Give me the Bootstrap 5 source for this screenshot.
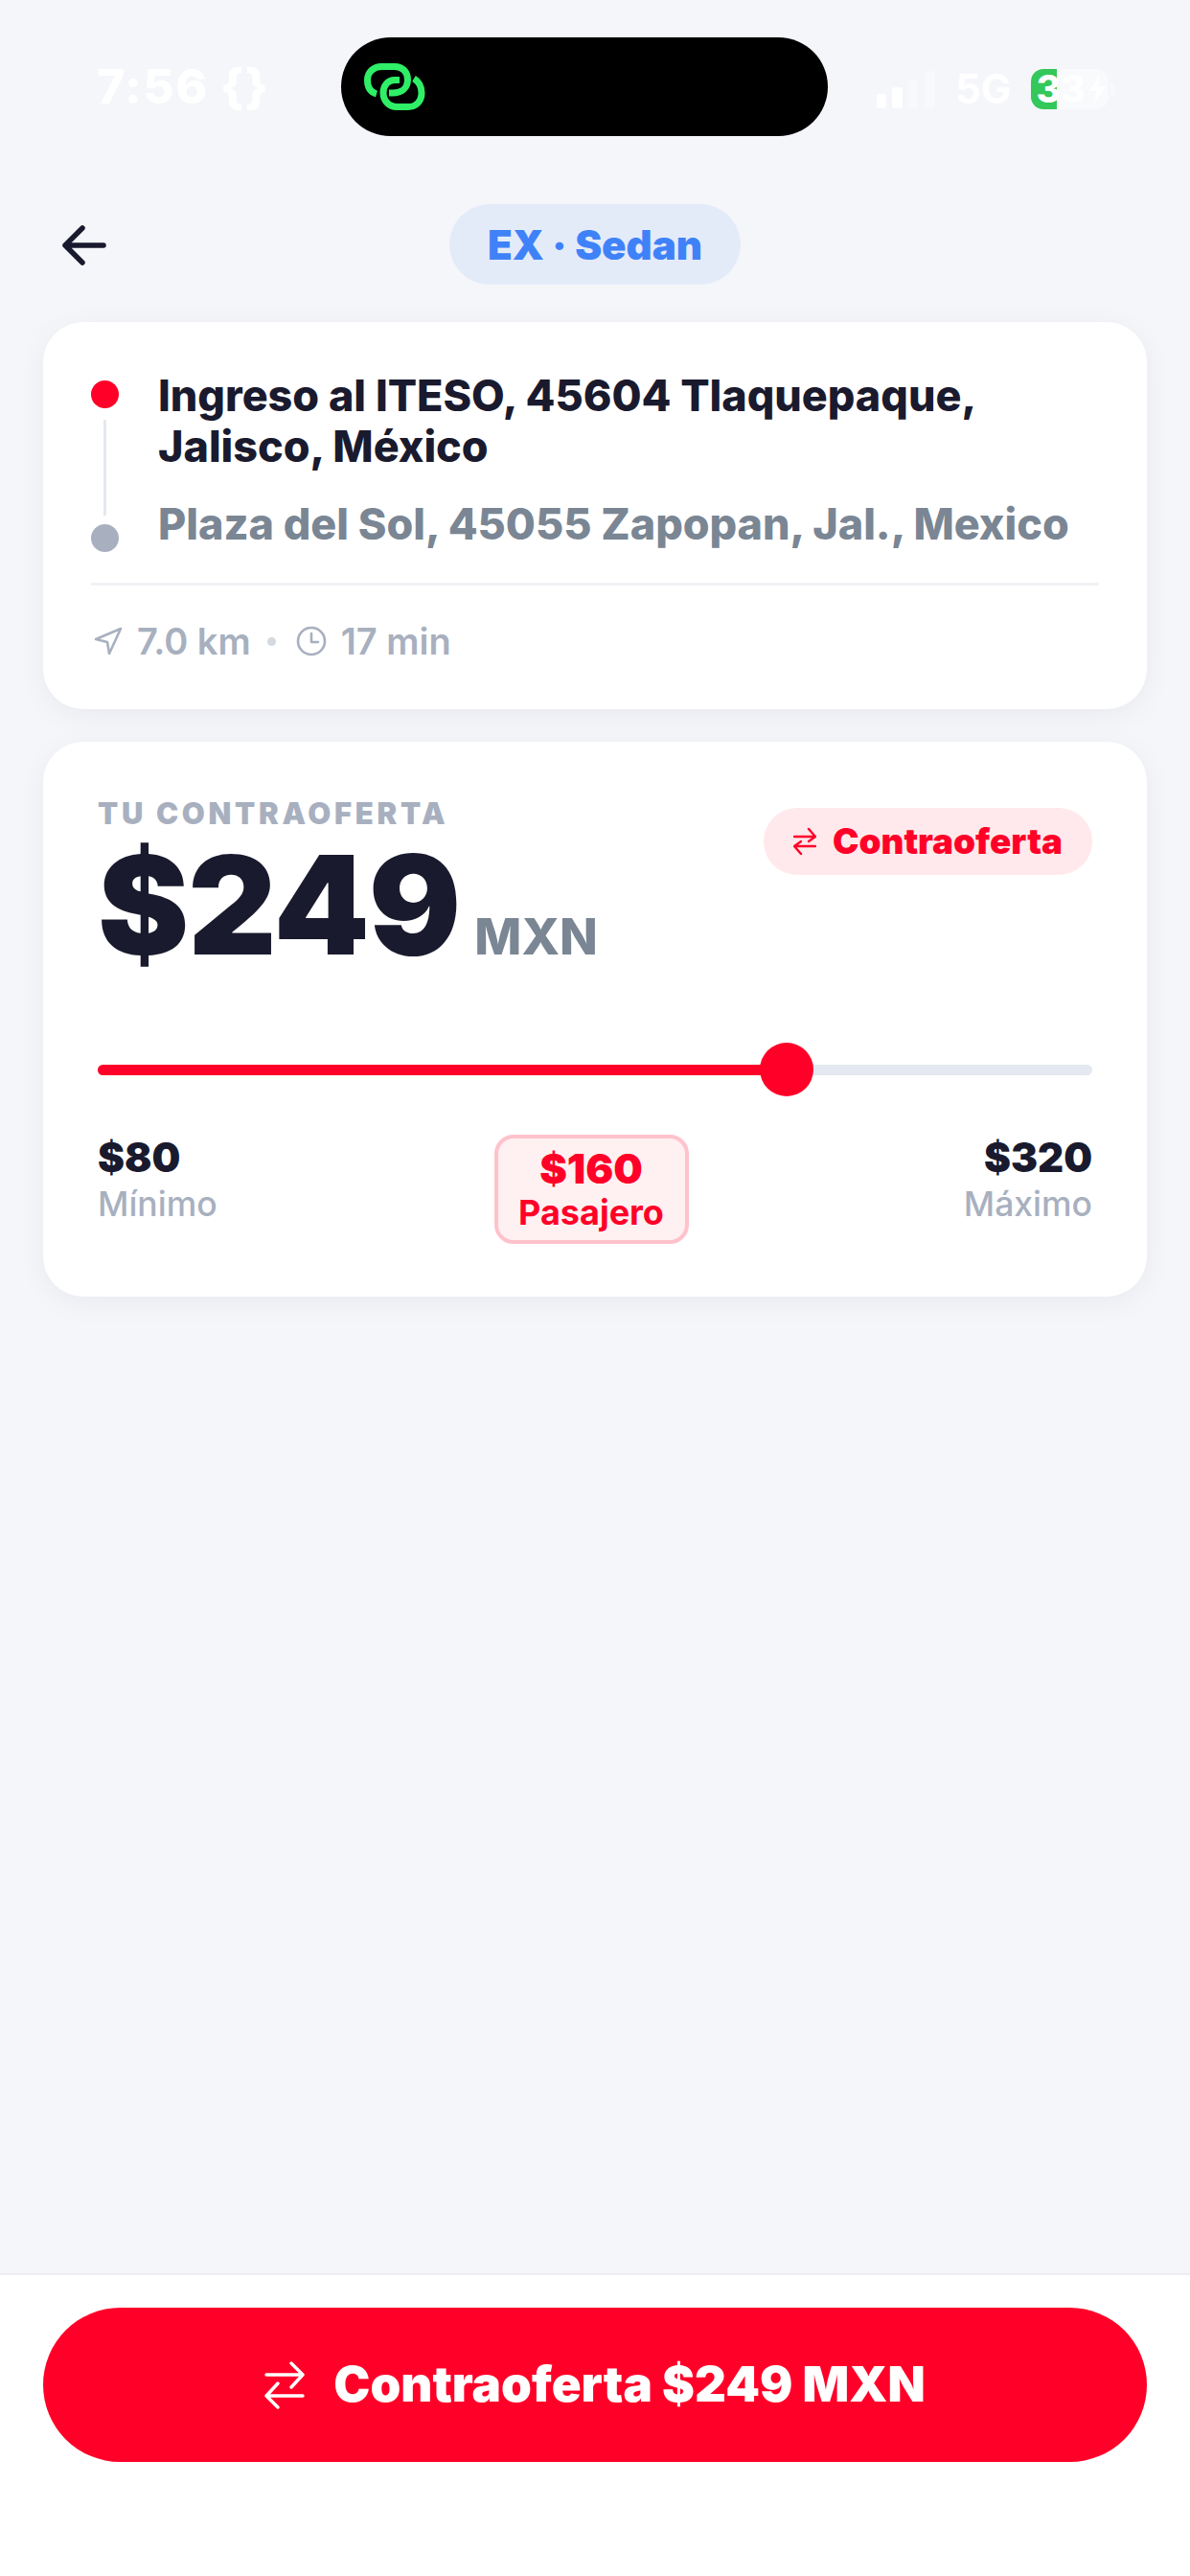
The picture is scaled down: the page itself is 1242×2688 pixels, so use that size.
<!DOCTYPE html>
<html lang="es">
<head>
    <meta charset="UTF-8">
    <meta name="viewport" content="width=device-width, initial-scale=1.0">
    <title>Contraoferta</title>
    <link rel="stylesheet" href="https://cdn.jsdelivr.net/npm/bootstrap@5.3.0/dist/css/bootstrap.min.css">
    <style>
        body { width: 1242px; height: 2688px; background: #f4f6fa; font-family: Inter, "Liberation Sans", sans-serif; color: #1a1a2e; overflow: hidden; }
        .status-row { height: 142px; padding: 39px 0 0; }
        .status-left { width: 356px; padding: 26px 0 0 101px; font-size: 50px; font-weight: 800; color: #fff; line-height: 50px; letter-spacing: 1.4px; }
        .island { width: 508px; height: 103px; background: #000; border-radius: 52px; padding: 27px 0 0 24px; }
        .status-right { padding: 30px 0 0 51px; color: #fff; font-size: 42px; font-weight: 700; line-height: 48px; }
        .signal-label { margin-left: 20px; }
        .batt-box { width: 81px; height: 42px; margin-left: 21px; border-radius: 13px; background: rgba(255,255,255,.45); font-size: 39px; font-weight: 800; line-height: 42px; }
        .batt-fill { width: 27px; background: #34c759; border-radius: 13px 0 0 13px; }
        .batt-num { left: 5px; top: 0; }
        .batt-bolt { right: 3px; top: 6px; }
        .batt-nub { width: 4px; height: 14px; margin-left: 2px; background: rgba(255,255,255,.4); border-radius: 0 4px 4px 0; }
        .top-bar { height: 84px; margin-top: 71px; padding: 0 65px; }
        .back-btn { left: 65px; top: 22px; }
        .type-pill { width: 304px; height: 84px; background: #e4ebf8; color: #3f82f8; font-size: 42px; font-weight: 900; }
        .page-cards { padding: 39px 45px 0; gap: 34px; }
        .app-card { border: 0; border-radius: 42px; background: #fff; box-shadow: 0 6px 30px rgba(26,26,46,.05); }
        .route-card { height: 404px; padding: 51px 50px 0; }
        .route-marks { width: 29px; padding-top: 10px; margin-right: 41px; }
        .dot { width: 29px; height: 29px; border-radius: 50%; flex: none; }
        .dot-from { background: #ff0028; }
        .dot-to { background: #a8b0bf; }
        .route-line { width: 3px; height: 100px; margin: 12px 0 9px; background: #e4e8f0; }
        .addr-from { font-size: 44.9px; font-weight: 800; line-height: 53px; }
        .addr-to { font-size: 44.9px; font-weight: 800; line-height: 53px; color: #7a8694; margin-top: 28px; }
        .route-rule { height: 3px; background: #f0f2f6; margin-top: 32px; }
        .route-meta { margin-top: 36px; font-size: 38px; font-weight: 600; color: #a8b0bf; line-height: 44px; padding-left: 3px; }
        .meta-icon { margin-right: 15px; }
        .meta-sep { width: 9px; height: 9px; border-radius: 50%; background: #d4d9e0; margin: 0 21px 0 17px; }
        .offer-card { height: 579px; padding: 60px 57px 0; }
        .offer-label { font-size: 31px; font-weight: 900; letter-spacing: 3.7px; color: #a8b0bf; line-height: 30px; }
        .offer-amount { margin-top: 21px; line-height: 118px; height: 118px; }
        .amount-big { font-size: 143px; font-weight: 900; line-height: 118px; letter-spacing: -1px; }
        .amount-cur { font-size: 52px; font-weight: 800; color: #7a8694; margin-left: 15px; line-height: 50px; }
        .offer-tag { width: 343px; height: 70px; margin-top: 9px; background: #ffe9ec; color: #ff0028; font-size: 36.8px; font-weight: 900; gap: 17px; }
        .slider-wrap { height: 11px; margin-top: 108px; background: #e4e8f0; border-radius: 6px; }
        .slider-fill { background: #ff0028; border-radius: 6px; }
        .slider-thumb { width: 56px; height: 56px; top: -23px; margin-left: -28px; border-radius: 50%; background: #ff0028; }
        .limits { margin-top: 62px; }
        .limit-box { width: 200px; }
        .limit-val { font-size: 42px; font-weight: 900; line-height: 48px; }
        .limit-name { font-size: 35.5px; font-weight: 500; color: #a8b0bf; line-height: 44px; margin-top: 3px; }
        .rider-box { width: 203px; height: 114px; border: 4px solid #ffc2cb; border-radius: 20px; background: #fff0f2; color: #ff0028; margin-right: 8px; }
        .rider-val { font-size: 43px; font-weight: 900; line-height: 48px; }
        .rider-name { font-size: 36px; font-weight: 700; line-height: 44px; }
        .page-footer { height: 316px; background: #fff; border-top: 2px solid #eceef3; padding: 34px 45px 0; }
        .send-btn { width: 100%; height: 161px; border: 0; border-radius: 81px; background: #ff0028; color: #fff; font-size: 51px; font-weight: 900; gap: 30px; }
        .send-btn:hover { background: #ff0028; color: #fff; }
    </style>
</head>
<body class="d-flex flex-column m-0">

    <!-- Status bar -->
    <div class="status-row d-flex">
        <div class="status-left">7:56 {}</div>
        <div class="island">
            <svg width="64" height="49" viewBox="0 0 64 49" fill="none" stroke="#2fef66" stroke-width="7">
                <path d="M13 32C6 30 3.5 24 3.5 17.5C3.5 9 10 3.5 18 3.5H32C40 3.5 45.5 9 45.5 17C45.5 26 39 31 30 31H26"/>
                <path d="M37 17.5H32C25 17.5 20 23 20 31C20 39 26 45.5 34 45.5H46C54 45.5 60 40 60 31C60 24 57 19 52 16"/>
            </svg>
        </div>
        <div class="status-right d-flex align-items-center align-self-start">
            <svg width="62" height="40" viewBox="0 0 62 40" fill="#fff">
                <rect x="0" y="25" width="10" height="15" rx="3"/>
                <rect x="16" y="18" width="11" height="22" rx="3"/>
                <rect x="33" y="10" width="10" height="30" rx="3" opacity=".4"/>
                <rect x="50" y="1" width="11" height="39" rx="3" opacity=".4"/>
            </svg>
            <span class="signal-label">5G</span>
            <div class="batt-box position-relative d-flex">
                <div class="batt-fill"></div>
                <span class="batt-num position-absolute">33</span>
                <svg class="batt-bolt position-absolute" width="17" height="30" viewBox="0 0 17 30" fill="#fff">
                    <path d="M11 0L0 17H7L5 30L17 12H9Z"/>
                </svg>
            </div>
            <div class="batt-nub"></div>
        </div>
    </div>

    <!-- Header -->
    <div class="top-bar position-relative d-flex justify-content-center">
        <svg class="back-btn position-absolute" width="46" height="42" viewBox="0 0 46 42" fill="none" stroke="#1a1a2e" stroke-width="5.5" stroke-linecap="round" stroke-linejoin="round">
            <path d="M43 21H3M21 3L3 21L21 39"/>
        </svg>
        <div class="type-pill rounded-pill d-flex align-items-center justify-content-center">EX · Sedan</div>
    </div>

    <div class="page-cards d-flex flex-column flex-grow-1">

        <!-- Route -->
        <div class="card app-card route-card">
            <div class="d-flex">
                <div class="route-marks d-flex flex-column align-items-center">
                    <div class="dot dot-from"></div>
                    <div class="route-line"></div>
                    <div class="dot dot-to"></div>
                </div>
                <div>
                    <div class="addr-from">Ingreso al ITESO, 45604 Tlaquepaque,<br>Jalisco, México</div>
                    <div class="addr-to">Plaza del Sol, 45055 Zapopan, Jal., Mexico</div>
                </div>
            </div>
            <div class="route-rule"></div>
            <div class="route-meta d-flex align-items-center">
                <svg class="meta-icon" width="30" height="30" viewBox="0 0 30 30" fill="none" stroke="#a8b0bf" stroke-width="2.6" stroke-linejoin="round">
                    <path d="M28 2L2 13L14 16L16 28Z"/>
                </svg>
                <span>7.0 km</span>
                <span class="meta-sep"></span>
                <svg class="meta-icon" width="32" height="32" viewBox="0 0 32 32" fill="none" stroke="#a8b0bf" stroke-width="2.6" stroke-linecap="round" stroke-linejoin="round">
                    <circle cx="16" cy="16" r="14"/>
                    <path d="M16 8V17H23"/>
                </svg>
                <span>17 min</span>
            </div>
        </div>

        <!-- Offer -->
        <div class="card app-card offer-card">
            <div class="d-flex justify-content-between align-items-start">
                <div>
                    <div class="offer-label">TU CONTRAOFERTA</div>
                    <div class="offer-amount d-flex align-items-end">
                        <span class="amount-big">$249</span>
                        <span class="amount-cur">MXN</span>
                    </div>
                </div>
                <div class="offer-tag rounded-pill d-flex align-items-center justify-content-center">
                    <svg width="24" height="30" viewBox="0 0 24 30" fill="none" stroke="#ff0028" stroke-width="2.4" stroke-linecap="round" stroke-linejoin="round">
                        <path d="M1 10H23M16 2L23 10L16 15M23 20H1M8 15L1 20L8 28"/>
                    </svg>
                    <span>Contraoferta</span>
                </div>
            </div>
            <div class="slider-wrap position-relative">
                <div class="slider-fill h-100" style="width: 69.3%"></div>
                <div class="slider-thumb position-absolute" style="left: 69.3%"></div>
            </div>
            <div class="limits d-flex justify-content-between align-items-start">
                <div class="limit-box">
                    <div class="limit-val">$80</div>
                    <div class="limit-name">Mínimo</div>
                </div>
                <div class="rider-box d-flex flex-column align-items-center justify-content-center">
                    <div class="rider-val">$160</div>
                    <div class="rider-name">Pasajero</div>
                </div>
                <div class="limit-box text-end">
                    <div class="limit-val">$320</div>
                    <div class="limit-name">Máximo</div>
                </div>
            </div>
        </div>
    </div>

    <!-- Footer button -->
    <div class="page-footer">
        <button class="btn send-btn d-flex align-items-center justify-content-center">
            <svg width="42" height="50" viewBox="0 0 42 50" fill="none" stroke="#fff" stroke-width="3.4" stroke-linecap="round" stroke-linejoin="round">
                <path d="M2 14H40M28 2L40 14L28 27M40 36H2M14 23L2 36L14 48"/>
            </svg>
            <span>Contraoferta $249 MXN</span>
        </button>
    </div>

</body>
</html>
